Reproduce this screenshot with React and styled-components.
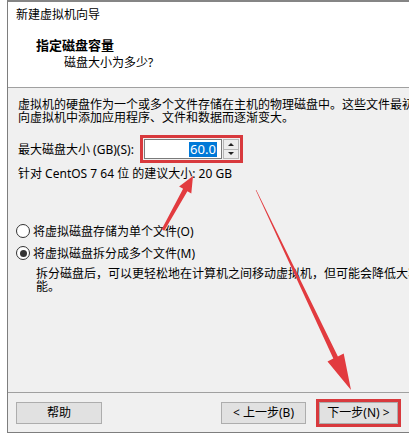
import React from "react";
import styled, { createGlobalStyle } from "styled-components";

const GlobalStyle = createGlobalStyle`
	html, body {
		margin: 0;
		padding: 0;
		background: #fff;
		overflow: hidden;
	}
	body {
		width: 409px;
		height: 440px;
		position: relative;
		font-family: "Noto Sans", "Noto Sans CJK SC", sans-serif;
		font-size: 12px;
		color: #000;
	}
	* {
		box-sizing: border-box;
	}
`;

const Page = styled.div`
	width: 409px;
	height: 440px;
	overflow: hidden;
	position: relative;
`;

const Dialog = styled.div`
	margin-left: 7px;
	width: 498px;
	height: 433px;
	border: 1px solid #7e7e7e;
	border-top: 2px solid #858585;
	display: flex;
	flex-direction: column;
	background: #f0f0f0;
`;

const Header = styled.div`
	height: 86px;
	background: #fff;
	border-bottom: 1px solid #a0a0a0;
	padding: 5px 0 0 8px;
	display: flex;
	flex-direction: column;
`;

const WindowTitle = styled.div`
	line-height: 16px;
	color: #000;
`;

const Heading = styled.div`
	margin: 14px 0 0 20px;
	font-size: 13px;
	font-weight: bold;
	line-height: 16px;
`;

const SubHeading = styled.div`
	margin: 2px 0 0 48px;
	line-height: 16px;
`;

const Body = styled.div`
	height: 304px;
	padding: 10px 0 0 10px;
	display: flex;
	flex-direction: column;
`;

const Paragraph = styled.div`
	line-height: 13px;
	white-space: nowrap;
`;

const SizeRow = styled.div`
	margin-top: 11px;
	display: flex;
	align-items: center;
	height: 28px;
`;

const SpinBox = styled.div`
	margin-left: 6px;
	display: flex;
	padding: 1px;
	border: 3px solid #d8393d;
`;

const NumberField = styled.div`
	width: 78px;
	height: 20px;
	background: #fff;
	border: 1px solid #7a7a7a;
	display: flex;
	align-items: center;
	justify-content: flex-end;
	padding-right: 4px;
	font-size: 13px;
`;

const Selected = styled.span`
	background: #0078d7;
	color: #fff;
	line-height: 15px;
	padding: 0 1px;
`;

const Spinner = styled.div`
	width: 16px;
	height: 20px;
	display: flex;
	flex-direction: column;
	margin-left: 1px;
`;

const SpinButton = styled.div`
	flex: 1;
	background: #ececec;
	border: 1px solid #b5b5b5;
	display: flex;
	align-items: center;
	justify-content: center;
	&:first-child {
		border-bottom: none;
	}
	&::after {
		content: "";
		border-left: 3px solid transparent;
		border-right: 3px solid transparent;
		${(p) =>
			p.$up ? "border-bottom: 3px solid #222;" : "border-top: 3px solid #222;"}
	}
`;

const Recommend = styled.div`
	margin-top: 3px;
	line-height: 16px;
`;

const RadioGroup = styled.div`
	margin-top: 41px;
	display: flex;
	flex-direction: column;
	gap: 6px;
`;

const RadioRow = styled.div`
	display: flex;
	align-items: center;
	gap: 3px;
	height: 16px;
	margin-left: -2px;
`;

const RadioDot = styled.span`
	width: 14px;
	height: 14px;
	border-radius: 50%;
	border: 1px solid #333;
	background: #fff;
	display: flex;
	align-items: center;
	justify-content: center;
	&::after {
		content: "";
		width: 7px;
		height: 7px;
		border-radius: 50%;
		background: ${(p) => (p.$checked ? "#333" : "transparent")};
	}
`;

const Hint = styled.div`
	margin: 0 0 0 18px;
	width: 450px;
	line-height: 13px;
`;

const Footer = styled.div`
	flex: 1;
	border-top: 1px solid #a0a0a0;
	padding: 9px 8px 0 8px;
	display: flex;
	gap: 13px;
`;

const Button = styled.div`
	width: ${(p) => p.$w || 85}px;
	height: 22px;
	background: #e1e1e1;
	border: 1px solid #adadad;
	display: flex;
	align-items: center;
	justify-content: center;
	line-height: 16px;
	white-space: nowrap;
	${(p) => (p.$push ? "margin-right: auto;" : "")}
	${(p) => (p.$marked ? "outline: 3px solid #d8393d; outline-offset: 0px;" : "")}
`;

const Overlay = styled.svg`
	position: absolute;
	left: 0;
	top: 0;
	pointer-events: none;
`;

function Arrows() {
	return (
		<Overlay width="409" height="440" viewBox="0 0 409 440">
			<polygon
				fill="#e23b3f"
				points="164.3,230.7 187.4,191.2 191.3,193.4 193,176 179.1,186.6 183.1,188.8 161.7,229.3"
			/>
			<polygon
				fill="#e23b3f"
				points="256.3,189.9 337.9,356.4 343.7,353.6 351,390 327.5,361.4 333.3,358.6 255.7,190.1"
			/>
		</Overlay>
	);
}

function App() {
	return (
		<Page>
			<GlobalStyle />
			<Dialog>
				<Header>
					<WindowTitle>新建虚拟机向导</WindowTitle>
					<Heading>指定磁盘容量</Heading>
					<SubHeading>磁盘大小为多少?</SubHeading>
				</Header>
				<Body>
					<Paragraph>
						虚拟机的硬盘作为一个或多个文件存储在主机的物理磁盘中。这些文件最初很小，随着您
						<br />
						向虚拟机中添加应用程序、文件和数据而逐渐变大。
					</Paragraph>
					<SizeRow>
						<span>最大磁盘大小 (GB)(S):</span>
						<SpinBox>
							<NumberField>
								<Selected>60.0</Selected>
							</NumberField>
							<Spinner>
								<SpinButton $up />
								<SpinButton />
							</Spinner>
						</SpinBox>
					</SizeRow>
					<Recommend>针对 CentOS 7 64 位 的建议大小: 20 GB</Recommend>
					<RadioGroup>
						<RadioRow>
							<RadioDot />
							<span>将虚拟磁盘存储为单个文件(O)</span>
						</RadioRow>
						<RadioRow>
							<RadioDot $checked />
							<span>将虚拟磁盘拆分成多个文件(M)</span>
						</RadioRow>
						<Hint>
							拆分磁盘后，可以更轻松地在计算机之间移动虚拟机，但可能会降低大容量磁盘的性能。
						</Hint>
					</RadioGroup>
				</Body>
				<Footer>
					<Button $w={86} $push>
						帮助
					</Button>
					<Button>&lt; 上一步(B)</Button>
					<Button $w={79} $marked>
						下一步(N) &gt;
					</Button>
					<Button>取消</Button>
				</Footer>
			</Dialog>
			<Arrows />
		</Page>
	);
}

export default App;
